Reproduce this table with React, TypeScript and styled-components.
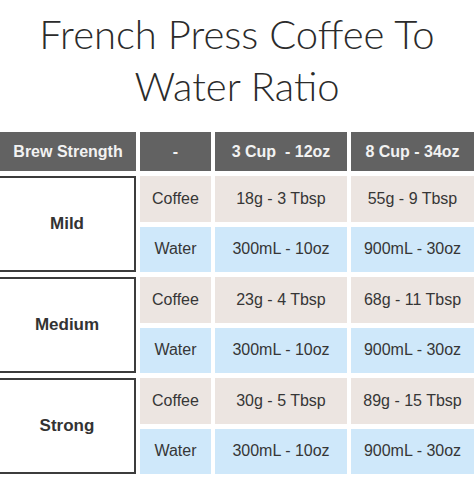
import React from 'react';
import styled, { createGlobalStyle } from 'styled-components';

const GlobalStyle = createGlobalStyle`
  html, body {
    margin: 0;
    padding: 0;
    background: #ffffff;
  }
  body {
    font-family: "Liberation Sans", Arial, sans-serif;
  }
`;

const Page = styled.div`
  width: 474px;
  height: 483px;
  overflow: hidden;
  background: #ffffff;
`;

const Title = styled.h1`
  margin: 0;
  padding: 8px 0 0 0;
  font-family: Lato, "Open Sans", sans-serif;
  font-weight: 300;
  font-size: 40px;
  line-height: 52px;
  color: #2b2b2b;
  text-align: center;
`;

const Table = styled.div`
  margin-top: 20px;
  display: grid;
  grid-template-columns: 136px 71px 132px 1fr;
  grid-template-rows: 39px repeat(6, 45.5px);
  column-gap: 4px;
  row-gap: 5px;
`;

const HeadCell = styled.div`
  background: #626262;
  color: #f2f2f2;
  font-weight: 700;
  font-size: 16px;
  display: flex;
  align-items: center;
  justify-content: center;
  white-space: pre;
`;

const LabelCell = styled.div`
  grid-row: span 2;
  border: 2px solid #3c3c3c;
  border-left: none;
  background: #ffffff;
  color: #333333;
  font-weight: 700;
  font-size: 17px;
  display: flex;
  align-items: center;
  justify-content: center;
`;

const DataCell = styled.div<{ $kind: 'coffee' | 'water' }>`
  background: ${p => (p.$kind === 'coffee' ? '#ece5e1' : '#cfe8fa')};
  color: #363636;
  font-size: 16px;
  display: flex;
  align-items: center;
  justify-content: center;
  white-space: nowrap;
`;

const groups = [
  { name: 'Mild', coffee: ['18g - 3 Tbsp', '55g - 9 Tbsp'] },
  { name: 'Medium', coffee: ['23g - 4 Tbsp', '68g - 11 Tbsp'] },
  { name: 'Strong', coffee: ['30g - 5 Tbsp', '89g - 15 Tbsp'] },
];

const water = ['300mL - 10oz', '900mL - 30oz'];

export default function App() {
  return (
    <Page>
      <GlobalStyle />
      <Title>
        French Press Coffee To
        <br />
        Water Ratio
      </Title>
      <Table>
        <HeadCell>Brew Strength</HeadCell>
        <HeadCell>-</HeadCell>
        <HeadCell>{'3 Cup  - 12oz'}</HeadCell>
        <HeadCell>8 Cup - 34oz</HeadCell>
        {groups.map(g => (
          <React.Fragment key={g.name}>
            <LabelCell>{g.name}</LabelCell>
            <DataCell $kind="coffee">Coffee</DataCell>
            <DataCell $kind="coffee">{g.coffee[0]}</DataCell>
            <DataCell $kind="coffee">{g.coffee[1]}</DataCell>
            <DataCell $kind="water">Water</DataCell>
            <DataCell $kind="water">{water[0]}</DataCell>
            <DataCell $kind="water">{water[1]}</DataCell>
          </React.Fragment>
        ))}
      </Table>
    </Page>
  );
}
